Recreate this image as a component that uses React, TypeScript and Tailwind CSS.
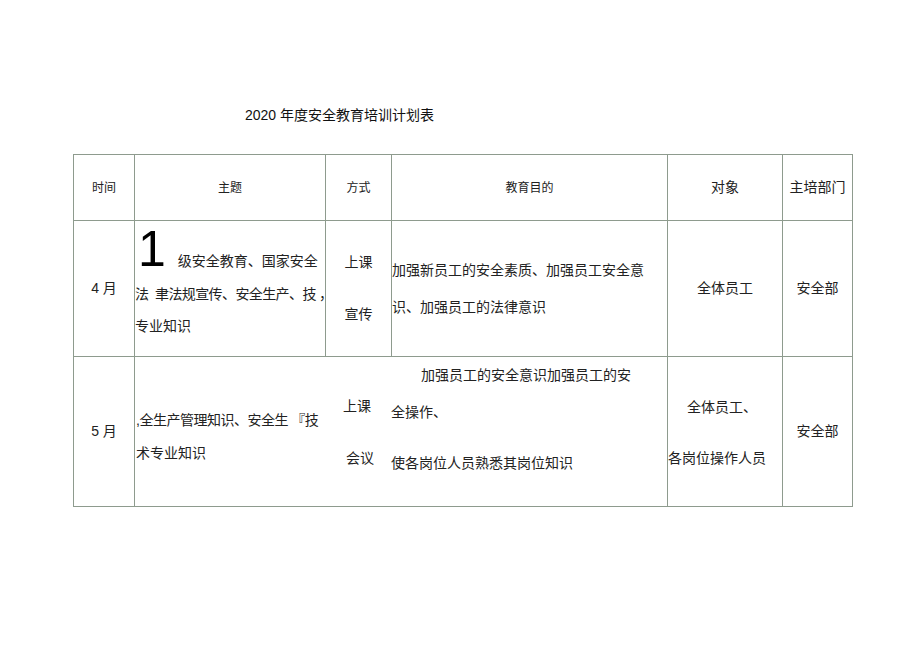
const font = "font-['Liberation_Sans','Noto_Sans_CJK_SC',sans-serif]";

export default function App() {
  return (
    <div className={`w-[920px] h-[650px] bg-white text-[#222] ${font}`}>
      <div className="pt-[105px] pl-[245px] text-[14px] leading-[20px] text-[#111]">
        2020 年度安全教育培训计划表
      </div>

      <div className="mt-[29px] ml-[73px] grid w-[780px] grid-cols-[60px_190px_65px_275px_114px_69px] grid-rows-[65px_135px_149px] gap-px bg-[#8e9b8e] p-px">
        {/* header */}
        <div className="flex items-center justify-center bg-white text-[12px]">时间</div>
        <div className="flex items-center justify-center bg-white text-[12px]">主题</div>
        <div className="flex items-center justify-center bg-white text-[12px]">方式</div>
        <div className="flex items-center justify-center bg-white text-[12px]">教育目的</div>
        <div className="flex items-center justify-center bg-white text-[14px]">对象</div>
        <div className="flex items-center justify-center bg-white text-[14px]">主培部门</div>

        {/* April */}
        <div className="flex items-center justify-center bg-white text-[14px]">4 月</div>
        <div className="bg-white pt-[3px] text-[14px] whitespace-nowrap">
          <div className="flex items-baseline pl-[3px]">
            <span className="text-[50px] leading-none text-black">1</span>
            <span className="ml-[12px]">级安全教育、国家安全</span>
          </div>
          <div className="mt-[4px] leading-[33px] tracking-[-0.6px]">
            法 &nbsp;聿法规宣传、安全生产、技 ，
          </div>
          <div className="leading-[31px]">专业知识</div>
        </div>
        <div className="flex flex-col items-center justify-center gap-[30px] bg-white text-[14px] leading-[22px]">
          <div className="-mt-[2px]">上课</div>
          <div>宣传</div>
        </div>
        <div className="flex flex-col justify-center bg-white text-[14px] leading-[37px] whitespace-nowrap">
          <div>加强新员工的安全素质、加强员工安全意</div>
          <div>识、加强员工的法律意识</div>
        </div>
        <div className="flex items-center justify-center bg-white text-[14px]">全体员工</div>
        <div className="flex items-center justify-center bg-white text-[14px]">安全部</div>

        {/* May */}
        <div className="flex items-center justify-center bg-white text-[14px]">5 月</div>
        <div className="col-span-3 flex bg-white text-[14px] whitespace-nowrap">
          <div className="w-[201px] pt-[47px] pl-[1px] leading-[33px]">
            <div className="tracking-[-0.5px]">,全生产管理知识、安全生 『技</div>
            <div>术专业知识</div>
          </div>
          <div className="w-[55px] pt-[38px] leading-[22px]">
            <div className="pl-[7px]">上课</div>
            <div className="mt-[30px] pl-[10px]">会议</div>
          </div>
          <div className="flex-1 pt-[7px] leading-[22px]">
            <div className="pl-[30px]">加强员工的安全意识加强员工的安</div>
            <div className="mt-[15px]">全操作、</div>
            <div className="mt-[29px]">使各岗位人员熟悉其岗位知识</div>
          </div>
        </div>
        <div className="bg-white pt-[39px] text-[14px] leading-[22px] whitespace-nowrap">
          <div className="pl-[19px]">全体员工、</div>
          <div className="mt-[29px]">各岗位操作人员</div>
        </div>
        <div className="flex items-center justify-center bg-white text-[14px]">安全部</div>
      </div>
    </div>
  );
}
